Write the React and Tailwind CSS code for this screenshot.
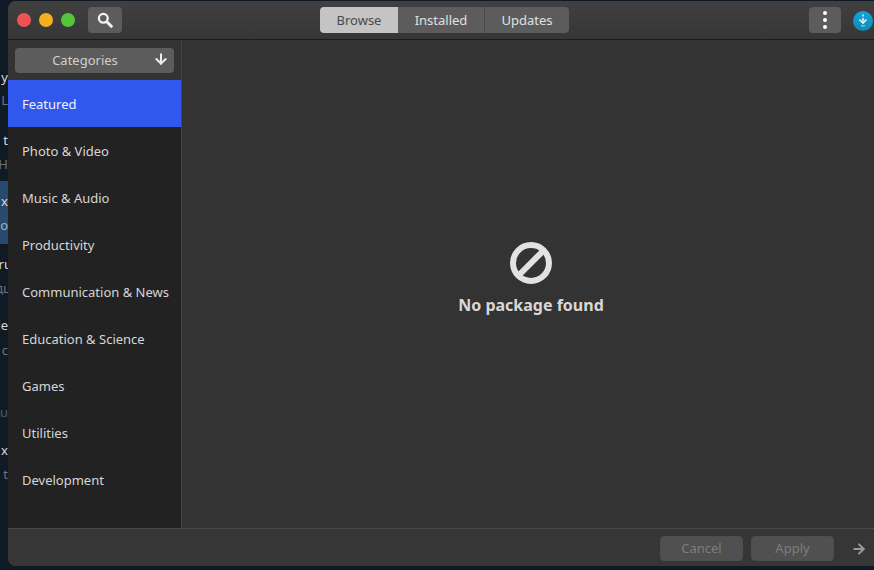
import { ArrowDown, ArrowRight } from 'lucide-react';

const categories = [
  'Featured',
  'Photo & Video',
  'Music & Audio',
  'Productivity',
  'Communication & News',
  'Education & Science',
  'Games',
  'Utilities',
  'Development',
];

// bits of the windows behind, cut off by the left edge of this one
const behind = [
  { pos: 'top-[68px] right-0', text: 'y', cls: 'text-[#d8d8d8]' },
  { pos: 'top-[91px] right-0', text: 'L', cls: 'text-[#6b7280]' },
  { pos: 'top-[131px] right-0', text: 't', cls: 'text-[#d8d8d8]' },
  { pos: 'top-[155px] right-0', text: 'H', cls: 'text-[#6b7280]' },
  { pos: 'top-[192px] right-0', text: 'x', cls: 'text-[#d8d8d8]' },
  { pos: 'top-[216px] right-0', text: 'o', cls: 'text-[#9fb4c8]' },
  { pos: 'top-[255px] right-[-4px]', text: 'ru', cls: 'text-[#d8d8d8]' },
  { pos: 'top-[279px] right-[-3px]', text: 'дц', cls: 'text-[#6b7280]' },
  { pos: 'top-[316px] right-0', text: 'de', cls: 'text-[#d8d8d8]' },
  { pos: 'top-[341px] right-0', text: 'c', cls: 'text-[#6b7280]' },
  { pos: 'top-[403px] right-0', text: 'u', cls: 'text-[#3f5f80]' },
  { pos: 'top-[441px] right-0', text: 'x', cls: 'text-[#d8d8d8]' },
  { pos: 'top-[465px] right-0', text: 't', cls: 'text-[#6b7280]' },
];

function WindowDot({ color }) {
  return <span className={`h-[14px] w-[14px] rounded-full ${color}`} />;
}

function SearchIcon() {
  return (
    <svg width="16" height="16" viewBox="0 0 16 16" fill="none" stroke="#f2f2f2">
      <circle cx="6.3" cy="6.3" r="4.4" strokeWidth="2.3" />
      <path d="M9.8 9.8 L14.3 14.3" strokeWidth="3" strokeLinecap="round" />
    </svg>
  );
}

function NoEntryIcon() {
  return (
    <svg width="44" height="44" viewBox="0 0 44 44" fill="none" stroke="#e2e2e2" strokeWidth="6">
      <circle cx="22" cy="22" r="18" />
      <path d="M9.5 34.5 L34.5 9.5" />
    </svg>
  );
}

function UpdateBadge() {
  return (
    <div className="ml-[12px] mt-px flex h-5 w-5 shrink-0 items-center justify-center rounded-full bg-gradient-to-b from-[#13a4dc] to-[#0d8bb2]">
      <svg width="12" height="13" viewBox="0 0 12 13" fill="none" stroke="#e8f6fc" strokeWidth="1.6">
        <path d="M6 0.5 V2.5 M6 4 V7.5" />
        <path d="M2.5 5.5 L6 9 L9.5 5.5" />
        <path d="M4.5 11.8 H7.5" strokeDasharray="1 1" />
      </svg>
    </div>
  );
}

export default function App() {
  return (
    <div className="flex h-[570px] w-[874px] overflow-hidden bg-[#101a25] font-['Noto_Sans',sans-serif] text-[13px]">
      {/* background strip */}
      <div className="relative w-2 shrink-0 overflow-hidden">
        <div className="absolute left-0 top-[181px] h-[63px] w-2 bg-[#274a6e]" />
        {behind.map((b) => (
          <span key={b.pos} className={`absolute whitespace-nowrap leading-[18px] ${b.pos} ${b.cls}`}>
            {b.text}
          </span>
        ))}
      </div>

      <div className="mt-px mb-1 flex min-w-0 flex-1 flex-col overflow-hidden rounded-tl-lg rounded-bl-lg bg-[#333333]">
        {/* header */}
        <header className="flex h-[39px] shrink-0 items-center border-b border-[#1c1c1c] bg-gradient-to-b from-[#404040] to-[#363636]">
          <div className="ml-[9px] flex items-center gap-2">
            <WindowDot color="bg-[#ed5353]" />
            <WindowDot color="bg-[#f5b01f]" />
            <WindowDot color="bg-[#55c63a]" />
          </div>
          <button className="ml-[13px] flex h-[26px] w-[34px] items-center justify-center rounded bg-[#5c5c5c]">
            <SearchIcon />
          </button>

          <div className="ml-[198px] flex h-[26px] overflow-hidden rounded text-[13px]">
            <div className="flex w-[78px] items-center justify-center bg-[#c4c4c4] pt-px text-[#4a4a4a]">Browse</div>
            <div className="flex w-[87px] items-center justify-center border-r border-[#4a4a4a] bg-[#5c5c5c] pt-px text-[#e0e0e0]">Installed</div>
            <div className="flex w-[84px] items-center justify-center bg-[#5c5c5c] pt-px text-[#e0e0e0]">Updates</div>
          </div>

          <button className="ml-[240px] flex h-[26px] w-8 flex-col items-center justify-center gap-[3px] rounded bg-[#5c5c5c]">
            <span className="h-[4px] w-[4px] rounded-full bg-white" />
            <span className="h-[4px] w-[4px] rounded-full bg-white" />
            <span className="h-[4px] w-[4px] rounded-full bg-white" />
          </button>
          <UpdateBadge />
        </header>

        <div className="flex min-h-0 flex-1">
          {/* sidebar */}
          <aside className="flex w-[174px] shrink-0 flex-col border-r border-[#444444] bg-[#222222]">
            <div className="flex h-10 shrink-0 items-center bg-[#333333] px-[7px]">
              <button className="relative flex h-[25px] w-[159px] items-center justify-center rounded bg-[#5c5c5c] pr-[19px] pt-[2px] text-[#cfcfcf]">
                Categories
                <ArrowDown size={16} strokeWidth={3} className="absolute right-[5px] top-[3px] text-[#eeeeee]" />
              </button>
            </div>
            {categories.map((c, i) => (
              <div
                key={c}
                className={`flex h-[47px] shrink-0 items-center whitespace-nowrap pl-[14px] pt-[2px] ${
                  i === 0 ? 'bg-[#3058ee] text-[#f2f2f2]' : 'text-[#d6d6d6]'
                }`}
              >
                {c}
              </div>
            ))}
          </aside>

          {/* main */}
          <main className="flex flex-1 flex-col items-center justify-center pb-[10px] pl-[6px]">
            <NoEntryIcon />
            <p className="mt-[8px] text-base font-bold text-[#d8d8d8]">No package found</p>
          </main>
        </div>

        {/* footer */}
        <footer className="flex h-[38px] shrink-0 items-center justify-end border-t border-[#4a4a4a] bg-[#363636] pr-[7px] pt-[2px]">
          <button className="flex h-[25px] w-[83px] items-center justify-center rounded border border-[#4d4d4d] bg-[#505050] pt-px text-[#7d7d7d]">Cancel</button>
          <button className="ml-2 flex h-[25px] w-[83px] items-center justify-center rounded border border-[#4d4d4d] bg-[#505050] pt-px text-[#7d7d7d]">Apply</button>
          <ArrowRight size={16} strokeWidth={3} className="ml-[17px] text-[#9a9a9a]" />
        </footer>
      </div>
    </div>
  );
}
